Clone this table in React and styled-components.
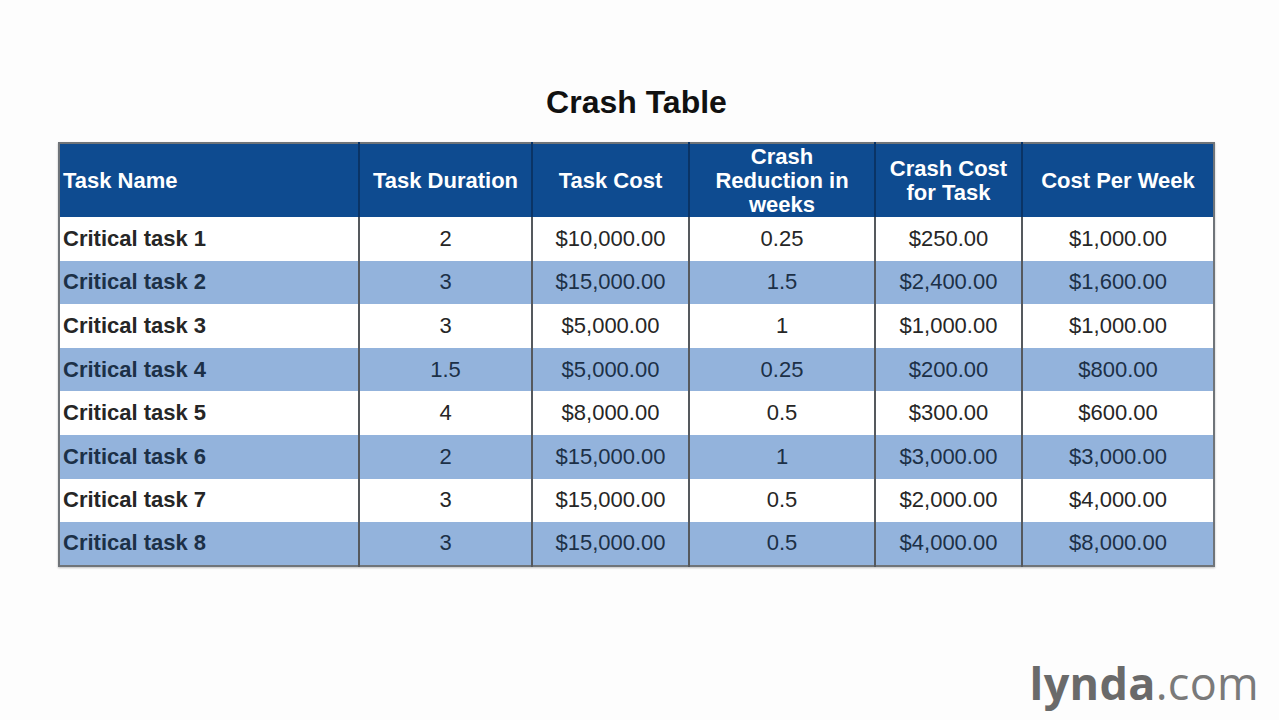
import React from 'react';
import styled, { createGlobalStyle } from 'styled-components';

const GlobalStyle = createGlobalStyle`
  html, body {
    margin: 0;
    padding: 0;
    background: #fdfdfd;
  }
  body {
    font-family: "Liberation Sans", Arial, sans-serif;
  }
`;

const columns = [
  { label: 'Task Name', width: 300, align: 'left' },
  { label: 'Task Duration', width: 173 },
  { label: 'Task Cost', width: 157 },
  { label: ['Crash', 'Reduction in', 'weeks'], width: 186 },
  { label: ['Crash Cost', 'for Task'], width: 147 },
  { label: 'Cost Per Week', width: 192 },
];

const rows = [
  ['Critical task 1', '2', '$10,000.00', '0.25', '$250.00', '$1,000.00'],
  ['Critical task 2', '3', '$15,000.00', '1.5', '$2,400.00', '$1,600.00'],
  ['Critical task 3', '3', '$5,000.00', '1', '$1,000.00', '$1,000.00'],
  ['Critical task 4', '1.5', '$5,000.00', '0.25', '$200.00', '$800.00'],
  ['Critical task 5', '4', '$8,000.00', '0.5', '$300.00', '$600.00'],
  ['Critical task 6', '2', '$15,000.00', '1', '$3,000.00', '$3,000.00'],
  ['Critical task 7', '3', '$15,000.00', '0.5', '$2,000.00', '$4,000.00'],
  ['Critical task 8', '3', '$15,000.00', '0.5', '$4,000.00', '$8,000.00'],
];

function App() {
  return (
    <Page>
      <GlobalStyle />
      <Title>Crash Table</Title>
      <Table>
        <colgroup>
          {columns.map((c, i) => (
            <col key={i} style={{ width: c.width }} />
          ))}
        </colgroup>
        <thead>
          <tr>
            {columns.map((c, i) => (
              <HeadCell key={i} $align={c.align}>
                {Array.isArray(c.label)
                  ? c.label.map((l, j) => <div key={j}>{l}</div>)
                  : c.label}
              </HeadCell>
            ))}
          </tr>
        </thead>
        <tbody>
          {rows.map((r, i) => (
            <Row key={i} $shaded={i % 2 === 1}>
              {r.map((v, j) =>
                j === 0 ? <NameCell key={j}>{v}</NameCell> : <Cell key={j}>{v}</Cell>
              )}
            </Row>
          ))}
        </tbody>
      </Table>
      <Logo>
        <b>lynda</b>.com
      </Logo>
    </Page>
  );
}

export default App;

const Page = styled.div`
  width: 1279px;
  height: 720px;
  display: flex;
  flex-direction: column;
  align-items: center;
  box-sizing: border-box;
  padding-top: 82px;
  overflow: hidden;
`;

const Title = styled.h1`
  margin: 0 0 0 -6px;
  font-size: 32px;
  line-height: 40px;
  font-weight: bold;
  color: #111111;
`;

const Table = styled.table`
  margin-top: 20px;
  margin-left: -6px;
  border-collapse: collapse;
  table-layout: fixed;
  width: 1155px;
  border: 2px solid #6f7479;
  box-shadow: 0 1px 2px rgba(0, 0, 0, 0.25);
`;

const HeadCell = styled.th`
  height: 73px;
  padding: 0 3px;
  background: #0e4b90;
  color: #ffffff;
  font-size: 22px;
  line-height: 24px;
  font-weight: bold;
  text-align: ${(p) => p.$align || 'center'};
  border-left: 2px solid #0a3466;
  white-space: nowrap;
  &:first-child {
    border-left: none;
  }
`;

const Row = styled.tr`
  height: 43.6px;
  background: ${(p) => (p.$shaded ? '#93b3dc' : '#ffffff')};
  color: ${(p) => (p.$shaded ? '#1c3047' : '#262626')};
`;

const Cell = styled.td`
  padding: 0 3px;
  font-size: 22px;
  text-align: center;
  border-left: 2px solid #55595e;
  white-space: nowrap;
`;

const NameCell = styled(Cell)`
  text-align: left;
  font-weight: bold;
  border-left: none;
`;

const Logo = styled.div`
  margin-top: auto;
  margin-bottom: 13px;
  align-self: flex-end;
  margin-right: 20px;
  font-family: "Open Sans", sans-serif;
  font-size: 45px;
  line-height: 48px;
  color: #7a7a7a;
  letter-spacing: 0.3px;
  b {
    font-weight: 700;
    color: #6a6a6a;
  }
`;
